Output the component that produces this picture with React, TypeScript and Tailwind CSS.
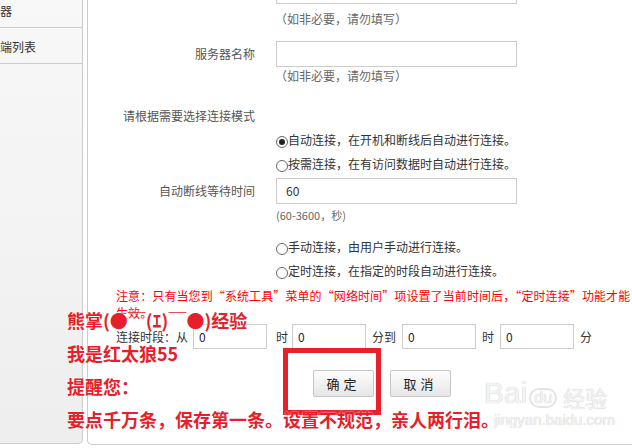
import React from "react"

const font = "font-['Noto_Sans_CJK_SC','Noto_Sans',sans-serif]"

function Field({ label, value = "" }: { label: string; value?: string }) {
  return (
    <div className="flex h-[26px] items-center">
      <div className="w-[167px] text-right text-[12px] leading-[16px] text-[#555]">{label}</div>
      <div className="ml-[21px] flex h-[26px] w-[241px] items-center border border-[#ccc] bg-white px-[9px] text-[12px] text-[#333]">
        {value}
      </div>
    </div>
  )
}

function Radio({ checked = false, text }: { checked?: boolean; text: string }) {
  return (
    <div className="flex h-[24px] items-center pl-[188px] text-[12px] leading-[16px] text-[#333]">
      <span className="mt-[3px] flex h-[12px] w-[12px] items-center justify-center rounded-full border border-[#666] bg-white">
        {checked && <span className="h-[6px] w-[6px] rounded-full bg-[#222]" />}
      </span>
      <span>{text}</span>
    </div>
  )
}

function SmallInput({ className = "" }: { className?: string }) {
  return (
    <div className={`flex h-[25px] w-[74px] items-center border border-[#ccc] bg-white px-[5px] text-[12px] text-[#223] ${className}`}>
      0
    </div>
  )
}

function Button({ children, className = "" }: { children: React.ReactNode; className?: string }) {
  return (
    <div
      className={`flex h-[27px] w-[61px] items-center justify-center rounded-[2px] border border-[#c6c6c6] bg-gradient-to-b from-[#fdfdfd] to-[#e6e6e6] text-[13px] tracking-[4px] text-[#222] ${className}`}
    >
      {children}
    </div>
  )
}

export default function App() {
  return (
    <div className={`relative flex h-[448px] w-[632px] overflow-hidden bg-white ${font}`}>
      {/* sidebar */}
      <div className="-mt-[8px] mb-[4px] w-[83px] shrink-0 rounded-br-[5px] border-r border-b border-[#ccc] bg-gradient-to-b from-[#f8f8f8] to-[#eeeeee] text-[12px] text-[#333]">
        <div className="flex h-[36px] items-center border-b border-[#ccc] pt-[2px]">器</div>
        <div className="flex h-[36px] items-center border-b border-[#ccc] pt-[2px]">端列表</div>
      </div>

      {/* main panel */}
      <div className="mb-[3px] ml-[4px] flex-1 overflow-hidden rounded-bl-[5px] border-l border-b border-[#ccc]">
        <div className="-mt-[22px] flex flex-col">
          <Field label="服务名" />
          <div className="mt-[7px] pl-[187px] text-[12px] leading-[16px] text-[#666]">（如非必要，请勿填写）</div>
          <div className="mt-[14px]">
            <Field label="服务器名称" />
          </div>
          <div className="mt-[1px] pl-[187px] text-[12px] leading-[16px] text-[#666]">（如非必要，请勿填写）</div>

          <div className="mt-[24px] pl-[35px] text-[12px] leading-[16px] text-[#555]">请根据需要选择连接模式</div>
          <div className="mt-[4px]">
            <Radio checked text="自动连接，在开机和断线后自动进行连接。" />
            <Radio text="按需连接，在有访问数据时自动进行连接。" />
          </div>

          <div className="mt-[2px]">
            <Field label="自动断线等待时间" value="60" />
          </div>
          <div className="mt-[3px] pl-[188px] text-[11px] leading-[16px] text-[#666]">(60-3600，秒)</div>

          <div className="mt-[12px]">
            <Radio text="手动连接，由用户手动进行连接。" />
            <Radio text="定时连接，在指定的时段自动进行连接。" />
          </div>

          <div className="mt-[4px] whitespace-nowrap pl-[28px] text-[12px] leading-[17px] tracking-[0.1px] text-[#f00]">
            注意：只有当您到“系统工具”菜单的“网络时间”项设置了当前时间后，“定时连接”功能才能
            <br />
            生效。
          </div>

          <div className="mt-[3px] flex items-center pl-[28px] text-[12px] text-[#333]">
            <span>连接时段：从</span>
            <SmallInput className="ml-[5px]" />
            <span className="ml-[9px]">时</span>
            <SmallInput className="ml-[4px]" />
            <span className="ml-[6px]">分到</span>
            <SmallInput className="ml-[6px]" />
            <span className="ml-[6px]">时</span>
            <SmallInput className="ml-[6px]" />
            <span className="ml-[6px]">分</span>
          </div>

          <div className="mt-[21px] flex pl-[225px]">
            <Button>确定</Button>
            <Button className="ml-[16px]">取消</Button>
          </div>
        </div>
      </div>

      {/* red highlight box over the confirm button */}
      <div className="absolute left-[283px] top-[348px] h-[67px] w-[98px] border-[5px] border-[#e8202a]" />

      {/* watermark */}
      <div className="pointer-events-none absolute left-[484px] top-[378px] flex flex-col text-[#f3f3f3] [text-shadow:0_0_1px_#bbb]">
        <div className="flex items-end font-['Liberation_Sans',sans-serif] leading-none">
          <span className="text-[30px]">Bai</span>
          <span className="ml-[2px] rounded-full border-2 border-[#e4e4e4] px-[3px] text-[16px]">du</span>
          <span className={`ml-[6px] text-[22px] ${font}`}>经验</span>
        </div>
        <div className="mt-[4px] pl-[10px] font-['Liberation_Sans',sans-serif] text-[15px] leading-none">jingyan.baidu.com</div>
      </div>

      {/* overlay caption */}
      <div className="pointer-events-none absolute left-[67px] top-[308px] flex flex-col gap-[9px] text-[18px] font-bold leading-[24px] text-[#e51f2b] [text-shadow:0_0_2px_#fff]">
        <div>熊掌(●￣(ｴ)￣●)经验</div>
        <div>我是红太狼55</div>
        <div>提醒您：</div>
        <div>要点千万条，保存第一条。设置不规范，亲人两行泪。</div>
      </div>
    </div>
  )
}
